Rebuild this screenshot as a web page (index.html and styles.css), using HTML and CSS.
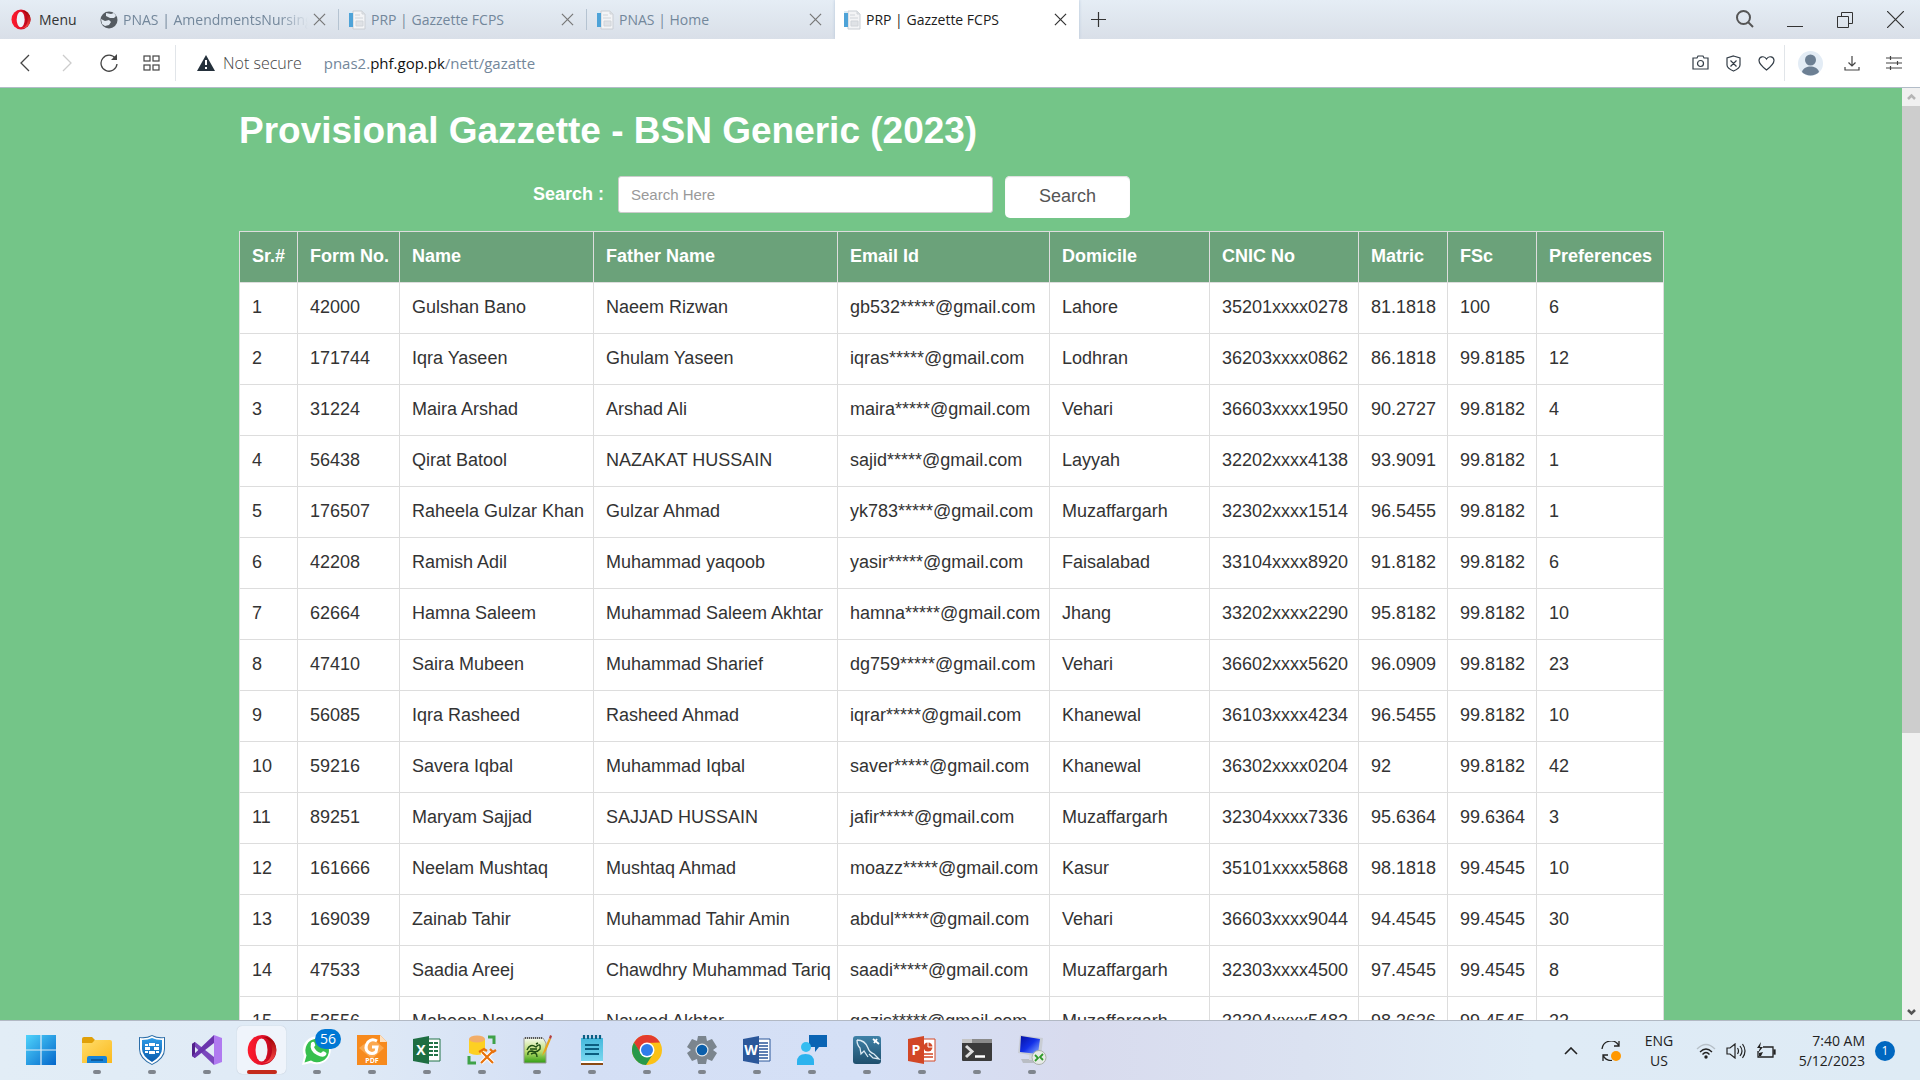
FILE: index.html
```html
<!DOCTYPE html>
<html lang="en">
<head>
<meta charset="utf-8">
<meta name="viewport" content="width=device-width, initial-scale=1">
<title>PRP | Gazzette FCPS</title>
<link rel="stylesheet" href="styles.css">
</head>
<body>
<svg class="defs" aria-hidden="true">
  <defs>
    <linearGradient id="operaOuter" x1="0" x2="1"><stop offset="0" stop-color="#ff1b2d"/><stop offset=".5" stop-color="#e3122a"/><stop offset="1" stop-color="#a70014"/></linearGradient>
    <linearGradient id="operaInner" x1="0" y1="0" x2="0" y2="1"><stop offset="0" stop-color="#9c0000"/><stop offset="1" stop-color="#ff4b4b"/></linearGradient>
    <linearGradient id="winTile" x1="0" y1="0" x2="1" y2="1"><stop offset="0" stop-color="#4fd3fb"/><stop offset="1" stop-color="#0467cb"/></linearGradient>
    <linearGradient id="folder" x1="0" y1="0" x2="1" y2="1"><stop offset="0" stop-color="#ffdd6b"/><stop offset="1" stop-color="#fbb91c"/></linearGradient>
    <linearGradient id="blueDown" x1="0" y1="0" x2="0" y2="1"><stop offset="0" stop-color="#2f9be6"/><stop offset="1" stop-color="#0a5cad"/></linearGradient>
    <linearGradient id="note" x1="0" y1="0" x2="0" y2="1"><stop offset="0" stop-color="#45b8dc"/><stop offset="1" stop-color="#7bd8f0"/></linearGradient>
    <linearGradient id="steel" x1="0" y1="0" x2="0" y2="1"><stop offset="0" stop-color="#3f82a8"/><stop offset="1" stop-color="#1e4f6d"/></linearGradient>
    <linearGradient id="screen" x1="0" y1="0" x2="1" y2="1"><stop offset="0" stop-color="#0410a0"/><stop offset=".5" stop-color="#1330e8"/><stop offset="1" stop-color="#8fb2ff"/></linearGradient>
    <linearGradient id="hills" x1="0" y1="0" x2="0" y2="1"><stop offset="0" stop-color="#f6faf0"/><stop offset=".55" stop-color="#b9dc6a"/><stop offset="1" stop-color="#2f9d13"/></linearGradient>
    <symbol id="opera" viewBox="0 0 30 30">
      <ellipse cx="15" cy="15" rx="14.300" ry="15" fill="url(#operaOuter)"/>
      <path d="M15 2c6 0 10 6 10 13s-4 13-10 13c9 1 14.300-6 14.300-13S24 1 15 2z" fill="url(#operaInner)"/>
      <ellipse cx="14.500" cy="15" rx="6" ry="11.500" fill="#eef3fa"/>
    </symbol>
    <symbol id="doc" viewBox="0 0 18 20">
      <path d="M5 1h9l3 3v15H5z" fill="#f3f4f6" stroke="#c9ced4"/>
      <path d="M14 1v3h3M7 5h5M7 8h8M8 11h7v5H8z" fill="#dfe2e6" stroke="#d0d4d9"/>
      <path d="M1 3h4v14H1z" fill="#4ea3d8"/><path d="M1 1h3v2H1z" fill="#d7ecf8"/>
    </symbol>
    <symbol id="cross" viewBox="0 0 14 14"><path d="M1 1l12 12M13 1L1 13" fill="none" stroke="currentColor" stroke-width="1.300"/></symbol>
  </defs>
</svg>

<header class="titlebar">
  <button class="menu" type="button"><svg width="20" height="21"><use href="#opera"/></svg>Menu</button>
  <nav class="tabs" aria-label="Tabs">
    <div class="tab">
      <svg width="18" height="18" viewBox="0 0 18 18"><circle cx="9" cy="9" r="8.500" fill="#555b61"/><path d="M1 8l4 2 4-1 2 2-2 3-4 1-3-2zM6 2l5 1 3-1 2 3-2 2-4 0-4-2z" fill="#e2e9f1"/></svg>
      <a class="tab-title fade" href="#">PNAS | AmendmentsNursing</a>
      <button class="tab-close" type="button" aria-label="Close tab"><svg width="13" height="13"><use href="#cross"/></svg></button>
    </div>
    <div class="tab">
      <svg width="18" height="20"><use href="#doc"/></svg>
      <a class="tab-title" href="#">PRP | Gazzette FCPS</a>
      <button class="tab-close" type="button" aria-label="Close tab"><svg width="13" height="13"><use href="#cross"/></svg></button>
    </div>
    <div class="tab">
      <svg width="18" height="20"><use href="#doc"/></svg>
      <a class="tab-title" href="#">PNAS | Home</a>
      <button class="tab-close" type="button" aria-label="Close tab"><svg width="13" height="13"><use href="#cross"/></svg></button>
    </div>
    <div class="tab active">
      <svg width="18" height="20"><use href="#doc"/></svg>
      <a class="tab-title" href="#">PRP | Gazzette FCPS</a>
      <button class="tab-close" type="button" aria-label="Close tab"><svg width="13" height="13"><use href="#cross"/></svg></button>
    </div>
    <button class="new-tab" type="button" aria-label="New tab"><svg width="15" height="15" viewBox="0 0 15 15"><path d="M7.500 0v15M0 7.500h15" stroke="#333" stroke-width="1.200"/></svg></button>
  </nav>
  <div class="window-controls">
    <button type="button" aria-label="Search tabs"><svg width="20" height="20" viewBox="0 0 20 20" fill="none" stroke="#555" stroke-width="2"><circle cx="8.500" cy="7.500" r="6.500"/><path d="M13 12l5 5"/></svg></button>
    <button type="button" aria-label="Minimize"><svg width="16" height="16" viewBox="0 0 16 16"><path d="M0 14.500h16" stroke="#333"/></svg></button>
    <button type="button" aria-label="Restore"><svg width="16" height="16" viewBox="0 0 16 16" fill="none" stroke="#333"><path d="M.5 4.500h11v11H.5zM4.500 4.500v-4h11v11h-4"/></svg></button>
    <button type="button" aria-label="Close"><svg width="17" height="17" viewBox="0 0 14 14"><path d="M0 0l14 14M14 0L0 14" stroke="#333"/></svg></button>
  </div>
</header>

<div class="toolbar">
  <div class="nav-buttons">
    <button type="button" aria-label="Back"><svg width="12" height="18" viewBox="0 0 12 18"><path d="M10 1L2 9l8 8" fill="none" stroke="#444" stroke-width="1.300"/></svg></button>
    <button type="button" aria-label="Forward"><svg width="12" height="18" viewBox="0 0 12 18"><path d="M2 1l8 8-8 8" fill="none" stroke="#ccc" stroke-width="1.300"/></svg></button>
    <button type="button" aria-label="Reload"><svg width="18" height="18" viewBox="0 0 18 18"><path d="M15.500 4.500A8 8 0 1 0 17 10" fill="none" stroke="#444" stroke-width="1.300"/><path d="M11 6h6V0z" fill="#444"/></svg></button>
    <button type="button" aria-label="Speed dial"><svg width="17" height="16" viewBox="0 0 17 16" fill="none" stroke="#444" stroke-width="1.200"><rect x="1" y="1" width="6" height="5"/><rect x="10" y="1" width="6" height="5"/><rect x="1" y="10" width="6" height="5"/><rect x="10" y="10" width="6" height="5"/></svg></button>
  </div>
  <div class="address">
    <svg width="18" height="16" viewBox="0 0 18 16"><path d="M9 0l9 16H0z" fill="#24303b"/><path d="M9 5v5M9 12v2" stroke="#fff" stroke-width="2"/></svg>
    <span class="insecure">Not secure</span>
    <a class="url" href="#">pnas2.<span>phf.gop.pk</span>/nett/gazatte</a>
  </div>
  <div class="page-actions">
    <button type="button" aria-label="Snapshot"><svg width="17" height="16" viewBox="0 0 17 16" fill="none" stroke="#333d47" stroke-width="1.200"><path d="M1 3h4l1-2h5l1 2h4v11H1z"/><circle cx="8.500" cy="8.500" r="3"/></svg></button>
    <button type="button" aria-label="Ad blocker"><svg width="15" height="17" viewBox="0 0 15 17" fill="none" stroke="#333d47" stroke-width="1.200"><path d="M7.500 1L14 3v7c0 3-4 5-6.500 6C5 15 1 13 1 10V3zM4.500 5.500l6 6M10.500 5.500l-6 6"/></svg></button>
    <button type="button" aria-label="Bookmark"><svg width="17" height="16" viewBox="0 0 17 16" fill="none" stroke="#333d47" stroke-width="1.200"><path d="M8.500 15C4 11.500 1 9 1 5.500S6 0 8.500 4C11 0 16 2 16 5.500S13 11.500 8.500 15z"/></svg></button>
  </div>
  <div class="user-actions">
    <button type="button" aria-label="Profile"><svg width="25" height="25" viewBox="0 0 25 25"><circle cx="12.500" cy="12.500" r="12.500" fill="#e3ecf5"/><circle cx="12.500" cy="9" r="5.500" fill="#6c7f93"/><path d="M4 21c1-4 5-5.500 8.500-5.500S20 17 21 21c-4 4.500-13 4.500-17 0z" fill="#6c7f93"/></svg></button>
    <button type="button" aria-label="Downloads"><svg width="16" height="16" viewBox="0 0 16 16" fill="none" stroke="#444" stroke-width="1.200"><path d="M8 1v10M4.500 7.500L8 11l3.500-3.500M1 12v3h14v-3"/></svg></button>
    <button type="button" aria-label="Easy setup"><svg width="16" height="16" viewBox="0 0 16 16" fill="none" stroke="#444" stroke-width="1.200"><path d="M0 3h16M0 8h16M0 13h16M4.500 1v4M11.500 6v4M4.500 11v4"/></svg></button>
  </div>
</div>

<div class="viewport">
  <main class="page">
    <div class="container">
      <h1>Provisional Gazzette - BSN Generic (2023)</h1>
      <form class="search">
        <label for="q">Search :</label>
        <input id="q" type="text" placeholder="Search Here">
        <button type="button">Search</button>
      </form>
      <table>
        <colgroup><col class="c-sr"><col class="c-form"><col class="c-name"><col class="c-father"><col class="c-email"><col class="c-dom"><col class="c-cnic"><col class="c-score"><col class="c-score"><col class="c-pref"></colgroup>
        <thead><tr><th>Sr.#</th><th>Form No.</th><th>Name</th><th>Father Name</th><th>Email Id</th><th>Domicile</th><th>CNIC No</th><th>Matric</th><th>FSc</th><th>Preferences</th></tr></thead>
        <tbody>
          <tr><td>1</td><td>42000</td><td>Gulshan Bano</td><td>Naeem Rizwan</td><td>gb532*****@gmail.com</td><td>Lahore</td><td>35201xxxx0278</td><td>81.1818</td><td>100</td><td>6</td></tr>
          <tr><td>2</td><td>171744</td><td>Iqra Yaseen</td><td>Ghulam Yaseen</td><td>iqras*****@gmail.com</td><td>Lodhran</td><td>36203xxxx0862</td><td>86.1818</td><td>99.8185</td><td>12</td></tr>
          <tr><td>3</td><td>31224</td><td>Maira Arshad</td><td>Arshad Ali</td><td>maira*****@gmail.com</td><td>Vehari</td><td>36603xxxx1950</td><td>90.2727</td><td>99.8182</td><td>4</td></tr>
          <tr><td>4</td><td>56438</td><td>Qirat Batool</td><td>NAZAKAT HUSSAIN</td><td>sajid*****@gmail.com</td><td>Layyah</td><td>32202xxxx4138</td><td>93.9091</td><td>99.8182</td><td>1</td></tr>
          <tr><td>5</td><td>176507</td><td>Raheela Gulzar Khan</td><td>Gulzar Ahmad</td><td>yk783*****@gmail.com</td><td>Muzaffargarh</td><td>32302xxxx1514</td><td>96.5455</td><td>99.8182</td><td>1</td></tr>
          <tr><td>6</td><td>42208</td><td>Ramish Adil</td><td>Muhammad yaqoob</td><td>yasir*****@gmail.com</td><td>Faisalabad</td><td>33104xxxx8920</td><td>91.8182</td><td>99.8182</td><td>6</td></tr>
          <tr><td>7</td><td>62664</td><td>Hamna Saleem</td><td>Muhammad Saleem Akhtar</td><td>hamna*****@gmail.com</td><td>Jhang</td><td>33202xxxx2290</td><td>95.8182</td><td>99.8182</td><td>10</td></tr>
          <tr><td>8</td><td>47410</td><td>Saira Mubeen</td><td>Muhammad Sharief</td><td>dg759*****@gmail.com</td><td>Vehari</td><td>36602xxxx5620</td><td>96.0909</td><td>99.8182</td><td>23</td></tr>
          <tr><td>9</td><td>56085</td><td>Iqra Rasheed</td><td>Rasheed Ahmad</td><td>iqrar*****@gmail.com</td><td>Khanewal</td><td>36103xxxx4234</td><td>96.5455</td><td>99.8182</td><td>10</td></tr>
          <tr><td>10</td><td>59216</td><td>Savera Iqbal</td><td>Muhammad Iqbal</td><td>saver*****@gmail.com</td><td>Khanewal</td><td>36302xxxx0204</td><td>92</td><td>99.8182</td><td>42</td></tr>
          <tr><td>11</td><td>89251</td><td>Maryam Sajjad</td><td>SAJJAD HUSSAIN</td><td>jafir*****@gmail.com</td><td>Muzaffargarh</td><td>32304xxxx7336</td><td>95.6364</td><td>99.6364</td><td>3</td></tr>
          <tr><td>12</td><td>161666</td><td>Neelam Mushtaq</td><td>Mushtaq Ahmad</td><td>moazz*****@gmail.com</td><td>Kasur</td><td>35101xxxx5868</td><td>98.1818</td><td>99.4545</td><td>10</td></tr>
          <tr><td>13</td><td>169039</td><td>Zainab Tahir</td><td>Muhammad Tahir Amin</td><td>abdul*****@gmail.com</td><td>Vehari</td><td>36603xxxx9044</td><td>94.4545</td><td>99.4545</td><td>30</td></tr>
          <tr><td>14</td><td>47533</td><td>Saadia Areej</td><td>Chawdhry Muhammad Tariq</td><td>saadi*****@gmail.com</td><td>Muzaffargarh</td><td>32303xxxx4500</td><td>97.4545</td><td>99.4545</td><td>8</td></tr>
          <tr><td>15</td><td>53556</td><td>Maheen Naveed</td><td>Naveed Akhtar</td><td>qazis*****@gmail.com</td><td>Muzaffargarh</td><td>32304xxxx5482</td><td>98.3636</td><td>99.4545</td><td>22</td></tr>
        </tbody>
      </table>
    </div>
  </main>
  <div class="scrollbar" aria-hidden="true">
    <svg width="18" height="18" viewBox="0 0 18 18"><path d="M6 11l3.500-3.500L13 11" fill="none" stroke="#b5b5b5" stroke-width="2.500"/></svg>
    <div class="track"><div class="thumb"></div></div>
    <svg width="18" height="18" viewBox="0 0 18 18"><path d="M6 8l3.500 3.500L13 8" fill="none" stroke="#555" stroke-width="2.500"/></svg>
  </div>
</div>

<footer class="taskbar">
  <div class="apps">
    <button class="app start" type="button" aria-label="Start"><svg width="30" height="30" viewBox="0 0 30 30"><path d="M0 0h14.400v14.400H0zM15.600 0H30v14.400H15.600zM0 15.600h14.400V30H0zM15.600 15.600H30V30H15.600z" fill="url(#winTile)"/></svg></button>
    <button class="app" type="button" aria-label="File Explorer"><svg width="30" height="30" viewBox="0 0 30 30"><path d="M0 4q0-2 2-2h8l3 3-2 4H0z" fill="#e0a008"/><path d="M0 8h10l3-3h15q2 0 2 2v21H0z" fill="url(#folder)"/><path d="M5 28v-5q0-2 2-2h16q2 0 2 2v5z" fill="#1683d8"/><path d="M9 25h12" stroke="#0b4f8c" stroke-width="1.500"/></svg></button>
    <button class="app" type="button" aria-label="FortiClient"><svg width="30" height="30" viewBox="0 0 30 30"><path d="M2 2q7 1 13-2 6 3 13 2v12q0 10-13 16Q2 24 2 14z" fill="#2c6ea8"/><path d="M3 3q7 1 12-2 5 3 12 2v11q0 9-12 15Q3 23 3 14z" fill="#fff"/><path d="M5 5q6 0 10-2 4 2 10 2v9q0 7-10 13Q5 21 5 14z" fill="url(#blueDown)"/><path d="M12 8h6v3h-6zM8 9h3v2H8zM19 9h3v2h-3zM8 12h5v3H8zM17 12h5v3h-5zM8 16h3v2H8zM12 16h6v3h-6zM19 16h3v2h-3z" fill="#fff"/></svg></button>
    <button class="app" type="button" aria-label="Visual Studio"><svg width="30" height="30" viewBox="0 0 30 30"><path d="M0 9l3-2 19 15v8z" fill="#7a47bd"/><path d="M0 9l3-2v16l-3-2z" fill="#52218a"/><path d="M0 21L22 0v8L3 23z" fill="#6a35ad"/><path d="M22 0l8 3v24l-8 3z" fill="#b07af0"/></svg></button>
    <button class="app current" type="button" aria-label="Opera"><svg width="30" height="30"><use href="#opera"/></svg></button>
    <button class="app" type="button" aria-label="WhatsApp"><svg width="30" height="30" viewBox="0 0 30 30"><path d="M0 30l2-9A14 14 0 1 1 9 28z" fill="#fff"/><path d="M2.500 27.500l2-7A11.800 11.800 0 1 1 9 25.500z" fill="#37c04d"/><path d="M9 8q3-3 4 1 1 2-1 3 2 5 7 6 2-3 4-1 3 1 0 4-3 2-8-1-8-4-6-12z" fill="#fff"/></svg><span class="badge">56</span></button>
    <button class="app" type="button" aria-label="Foxit PDF"><svg width="30" height="30" viewBox="0 0 30 30"><path d="M0 0h23l7 7v23H0z" fill="#f78a1d"/><path d="M23 0v7h7z" fill="#fde0bf"/><path d="M15 3l12 10-12 11L2 13z" fill="#fba84f"/><path d="M20 6q-5-3-9 1-4 6 0 10 4 3 8 0l1-5h-5" fill="none" stroke="#fff" stroke-width="3"/><text x="15" y="28" class="pdf">PDF</text></svg></button>
    <button class="app" type="button" aria-label="Excel"><svg width="30" height="30" viewBox="0 0 30 30"><path d="M14 4h14v22H14z" fill="#fff" stroke="#217346"/><path d="M17 7h4v2h-4zM22 7h4v2h-4zM17 11h4v2h-4zM22 11h4v2h-4zM17 15h4v2h-4zM22 15h4v2h-4zM17 19h4v2h-4zM22 19h4v2h-4z" fill="#217346"/><path d="M1 4l16-3v28L1 26z" fill="#1e6e42"/><text x="9" y="20" class="letter">X</text></svg></button>
    <button class="app" type="button" aria-label="SQL tools"><svg width="30" height="30" viewBox="0 0 30 30"><path d="M2 4h16v14q-8 4-16 0z" fill="#fdd023"/><ellipse cx="10" cy="4" rx="8" ry="3.500" fill="#f2ad68"/><path d="M21 2h6v7M2 21v7h7" fill="none" stroke="#3fa249" stroke-width="3"/><path d="M14 28l12-12M26 28L15 17" stroke="#fff" stroke-width="4"/><path d="M14 28l12-12M26 28L15 17M12 17l5-3 3 2M23 14l3 3 3-2" fill="none" stroke="#e8720c" stroke-width="2.200"/></svg></button>
    <button class="app" type="button" aria-label="Notepad++"><svg width="30" height="30" viewBox="0 0 30 30"><path d="M2 3h19l3 5v20H2z" fill="url(#hills)" stroke="#999"/><path d="M3 3h17" stroke="#555" stroke-width="2" stroke-dasharray="1 1"/><path d="M5 15q3-7 9-3 5-5 4 2-3 4-8 2-5 0-4 4M8 14h7M9 19q6-3 6 3M14 9l2-1" fill="none" stroke="#1d4d13" stroke-width="1.400"/><path d="M20 21l2-6 5-12 2 1-5 12z" fill="#e8a51e"/><path d="M27 3l1-3 2 1-1 3z" fill="#b33e3e"/></svg></button>
    <button class="app" type="button" aria-label="Notepad"><svg width="30" height="30" viewBox="0 0 30 30"><path d="M4 3h22v24H4z" fill="url(#note)"/><path d="M4 26h22v2H4z" fill="#fff"/><path d="M4 28h22v2H4z" fill="#8a4a14"/><path d="M8 10h14M8 14h14M8 19h14" stroke="#0b5d80" stroke-width="1.800"/><path d="M7 0v4M11 0v4M15 0v4M19 0v4M23 0v4" stroke="#0c5f84" stroke-width="2.200"/></svg></button>
    <button class="app" type="button" aria-label="Chrome"><svg width="30" height="30" viewBox="0 0 30 30"><circle cx="15" cy="15" r="15" fill="#fbc116"/><path d="M2 7.500a15 15 0 0 1 26 0L15 8l-7 10z" fill="#e33b2e"/><path d="M2 7.500A15 15 0 0 0 14 30l7-11-6 2.500-6-3z" fill="#27994a"/><circle cx="15" cy="15" r="7.500" fill="#fff"/><circle cx="15" cy="15" r="6" fill="#2f7de9"/></svg></button>
    <button class="app" type="button" aria-label="Settings"><svg width="30" height="30" viewBox="0 0 30 30"><path d="M11 1h8l1 5 5-2 5 8-4 3 4 3-5 8-5-2-1 5h-8l-1-5-5 2-5-8 4-3-4-3 5-8 5 2z" fill="#7b858e"/><circle cx="15" cy="15" r="6.500" fill="#e3e8ec"/><circle cx="15" cy="15" r="5.300" fill="#0c5faa"/></svg></button>
    <button class="app" type="button" aria-label="Word"><svg width="30" height="30" viewBox="0 0 30 30"><path d="M14 4h14v22H14z" fill="#fff" stroke="#2b579a"/><path d="M17 8h9M17 11h9M17 14h9M17 17h9M17 20h9M17 23h9" stroke="#2b579a" stroke-width="1.300"/><path d="M1 4l16-3v28L1 26z" fill="#2b579a"/><text x="9" y="20" class="letter">W</text></svg></button>
    <button class="app" type="button" aria-label="Feedback"><svg width="30" height="30" viewBox="0 0 30 30"><path d="M12 0h18v12h-8l-4 5v-5h-6z" fill="#0a64b4"/><circle cx="9" cy="12" r="5" fill="#35bdf1"/><path d="M0 30v-3q0-8 8.500-8t8.500 8v3z" fill="#2cb3ee"/></svg></button>
    <button class="app" type="button" aria-label="MySQL Workbench"><svg width="30" height="30" viewBox="0 0 30 30"><rect x="1" y="1" width="28" height="28" rx="3" fill="url(#steel)"/><path d="M5 5q8 0 11 8 1 4 6 6l5 5-6-1-4-4M5 5q0 5 3 8l1 6 3-3 4 6" fill="none" stroke="#dbe9f2" stroke-width="1.300"/><path d="M21 4l6 5M25 4l-3 4" stroke="#fff" stroke-width="1.800"/></svg></button>
    <button class="app" type="button" aria-label="PowerPoint"><svg width="30" height="30" viewBox="0 0 30 30"><path d="M14 4h14v22H14z" fill="#fff" stroke="#d24726"/><circle cx="21" cy="12" r="4.500" fill="#d24726"/><path d="M21 7v5h5" fill="none" stroke="#fff"/><path d="M17 19h9M17 22h9" stroke="#d24726" stroke-width="1.500"/><path d="M1 4l16-3v28L1 26z" fill="#d24726"/><text x="9" y="20" class="letter">P</text></svg></button>
    <button class="app" type="button" aria-label="Terminal"><svg width="30" height="30" viewBox="0 0 30 30"><rect y="4" width="30" height="22" rx="1" fill="#3b3b3b"/><path d="M0 4h30v4H0z" fill="#8b8b8b"/><path d="M0 4h10v4H0z" fill="#c4c4c4"/><path d="M4 11l6 5.500L4 22" fill="none" stroke="#ddd" stroke-width="3"/><path d="M13 21.500h10" stroke="#fff" stroke-width="2.500"/></svg></button>
    <button class="app" type="button" aria-label="Remote Desktop"><svg width="30" height="30" viewBox="0 0 30 30"><path d="M4 24h13l2 4H6z" fill="#b9bdc4"/><path d="M12 20h4v5h-4z" fill="#d5d8dd"/><path d="M3 0l23 3-2 19L1 18z" fill="#c9cdd4"/><path d="M4 1l19 3-2 15L3 17z" fill="url(#screen)"/><circle cx="22" cy="22.500" r="7" fill="#e7ebe7" stroke="#aab0aa"/><path d="M18 20l3 3-3 3M26 19l-3 3 3 3" fill="none" stroke="#2f9a2a" stroke-width="1.800"/></svg></button>
  </div>
  <div class="tray">
    <button class="t-wide" type="button" aria-label="Hidden icons"><svg width="14" height="8" viewBox="0 0 14 8"><path d="M1 7l6-6 6 6" fill="none" stroke="#222" stroke-width="1.600"/></svg></button>
    <button class="t-wide" type="button" aria-label="Updates"><svg width="20" height="20" viewBox="0 0 20 20"><path d="M1 8A9 9 0 0 1 18 5M18 0v5h-5M11 19.500A9 9 0 0 1 2 14M2 20v-6h5" fill="none" stroke="#222" stroke-width="1.300"/><circle cx="15" cy="15" r="5" fill="#ff9800"/></svg></button>
    <button class="lang" type="button">ENG<br>US</button>
    <button class="t-icon" type="button" aria-label="Wi-Fi"><svg width="20" height="16" viewBox="0 0 20 16" fill="none" stroke-width="1.300"><path d="M1 6q9-9 18 0" stroke="#b7c0c8"/><path d="M4 9q6-6 12 0M6.500 11.500q3.500-4 7 0" stroke="#222"/><circle cx="10" cy="14" r="1.700" fill="#222"/></svg></button>
    <button class="t-icon" type="button" aria-label="Volume"><svg width="20" height="16" viewBox="0 0 20 16" fill="none" stroke="#222" stroke-width="1.200"><path d="M1 5h3l5-4v14l-5-4H1zM11.500 5q2 3 0 6M14 3q4 5 0 10M16.500 1q5 7 0 14"/></svg></button>
    <button class="t-icon" type="button" aria-label="Battery"><svg width="20" height="18" viewBox="0 0 20 18" fill="none" stroke="#222" stroke-width="1.300"><path d="M7 5h10v10H2V9"/><path d="M18 8h1v4h-1z" fill="#222"/><path d="M5 0L1 6h3l-2 5 5-6H4zM3 14v-3l4-1-2 4z" fill="#222" stroke="none"/></svg></button>
    <button class="clock" type="button">7:40 AM<br>5/12/2023</button>
    <span class="count">1</span>
  </div>
</footer>
</body>
</html>
```

FILE: styles.css
```css
* { box-sizing: border-box; }

body {
  margin: 0;
  height: 100vh;
  display: grid;
  grid-template-rows: 39px 49px minmax(0, 1fr) 59px;
  overflow: hidden;
  font-family: "Open Sans", "Noto Sans", sans-serif;
  font-size: 14px;
  color: #333;
}

.defs { position: absolute; width: 0; height: 0; }

button {
  border: 0;
  padding: 0;
  background: none;
  font: inherit;
  color: inherit;
}

svg { display: block; flex: none; }
a { text-decoration: none; color: inherit; }

/* Title bar */
.titlebar {
  display: flex;
  background: linear-gradient(#e5edf5, #d9dfe8);
}

.menu {
  width: 91px;
  display: flex;
  align-items: center;
  gap: 8px;
  padding-left: 11px;
  flex: none;
}

.tabs { display: flex; flex: 1; min-width: 0; }

.tab {
  width: 248px;
  display: flex;
  align-items: center;
  gap: 5px;
  padding: 0 13px 0 9px;
  color: #73879b;
  background: linear-gradient(#b5c3d1, #b5c3d1) right center / 1px 21px no-repeat;
}

.tab:nth-child(3) { background: none; }

.tab.active {
  width: 244px;
  padding: 0 12px 0 8px;
  background: #fff;
  color: #1c1c1c;
  box-shadow: 0 0 3px #b3c4d8;
  clip-path: inset(0 -3px 0 -3px);
}

.tab-title {
  flex: 1;
  min-width: 0;
  overflow: hidden;
  white-space: nowrap;
}

.tab-title.fade {
  -webkit-mask-image: linear-gradient(to right, #000 84%, transparent);
  mask-image: linear-gradient(to right, #000 84%, transparent);
}

.tab-close { color: #777; }
.active .tab-close { color: #333; }
.new-tab { padding: 0 12px; }

.window-controls { display: flex; }
.window-controls button {
  width: 50px;
  display: grid;
  place-items: center;
}

/* Address bar */
.toolbar {
  display: flex;
  align-items: center;
  background: #fff;
  border-bottom: 1px solid #b2bcc8;
  padding: 0 5px 0 4px;
}

.nav-buttons, .page-actions, .user-actions {
  display: flex;
  align-items: center;
  height: 36px;
}

.nav-buttons { border-right: 1px solid #e1e5e9; }
.nav-buttons, .user-actions { flex: none; }
.nav-buttons { padding-right: 3px; }

.nav-buttons button, .user-actions button {
  width: 42px;
  display: grid;
  place-items: center;
}

.page-actions button {
  width: 33px;
  display: grid;
  place-items: center;
}

.page-actions { padding-right: 1px; }
.user-actions { border-left: 1px solid #e1e5e9; padding-left: 4px; }

.address {
  flex: 1;
  display: flex;
  align-items: center;
  padding-left: 21px;
  font-size: 15px;
}

.insecure {
  margin: 0 22px 0 8px;
  font-size: 16px;
  font-weight: 300;
  color: #444;
}

.url { color: #73879b; }
.url span { color: #111; }

/* Web page */
.viewport {
  display: flex;
  min-height: 0;
  border-bottom: 1px solid #b2b9c4;
}

.page {
  flex: 1;
  min-width: 0;
  overflow: hidden;
  background: #74c588;
  font-family: "Liberation Sans", Arial, sans-serif;
  font-size: 18px;
  line-height: 24px;
}

.container { max-width: 1424px; margin: 0 auto; }

h1 {
  margin: 22px 0 24px;
  font-size: 37px;
  line-height: 42px;
  color: #fff;
}

.search {
  display: flex;
  align-items: flex-start;
  margin-bottom: 13px;
}

.search label {
  width: 365px;
  padding-top: 6px;
  text-align: right;
  font-weight: bold;
  color: #fff;
}

.search input {
  width: 375px;
  height: 37px;
  margin: 0 12px 0 14px;
  padding: 0 12px;
  border: 1px solid #ccc;
  border-radius: 3px;
  background: #fff;
  font: inherit;
  font-size: 15px;
  color: #555;
}

.search input::placeholder { color: #999; }

.search button {
  width: 125px;
  height: 42px;
  padding-bottom: 2px;
  border-radius: 5px;
  background: #fff;
  box-shadow: inset 0 1px 1px #ddd;
  color: #555;
}

table {
  width: 100%;
  table-layout: fixed;
  border-collapse: collapse;
  background: #fff;
}

th, td {
  padding: 12px 0 14px 12px;
  border: 1px solid #ddd;
  text-align: left;
  white-space: nowrap;
}

th { background: #6ba27a; color: #fff; }

.c-sr { width: 58px; }
.c-form { width: 102px; }
.c-name { width: 194px; }
.c-father { width: 244px; }
.c-email { width: 212px; }
.c-dom { width: 160px; }
.c-cnic { width: 149px; }
.c-score { width: 89px; }
.c-pref { width: 127px; }

.scrollbar {
  width: 18px;
  flex: none;
  display: flex;
  flex-direction: column;
  background: #f0f0f0;
}

.track { flex: 1; }
.thumb { height: 70%; background: #cdcdcd; }

/* Taskbar */
.taskbar {
  display: flex;
  justify-content: space-between;
  background: linear-gradient(to right, #e2edf6 0, #dfeaf6 18%, #d4dff5 30%, #d5e0f6 45%, #d8dbee 56%, #dbe2f1 68%, #dfebf6 80%, #deebf5);
}

.apps { display: flex; padding-left: 12px; }

.app {
  position: relative;
  width: 55px;
  display: flex;
  flex-direction: column;
  align-items: center;
  padding-top: 14px;
}

.app::after {
  content: "";
  width: 8px;
  height: 4px;
  margin-top: 5px;
  border-radius: 2px;
  background: #7f858d;
}

.app.start { width: 57px; }
.app.start::after { background: none; }

.app.current {
  width: 49px;
  margin: 5px 3px 6px;
  padding-top: 9px;
  border-radius: 5px;
  background: #eff4fb;
  box-shadow: 0 0 1px #aab6c4;
}

.app.current::after { width: 30px; background: #c42b1c; }

.badge {
  position: absolute;
  top: 8px;
  right: 3px;
  width: 26px;
  height: 20px;
  border-radius: 10px;
  background: #0078d4;
  color: #fff;
  line-height: 20px;
}

.letter {
  font: bold 14px "Open Sans", sans-serif;
  fill: #fff;
  text-anchor: middle;
}

.pdf {
  font: bold 7px "Open Sans", sans-serif;
  fill: #fff;
  text-anchor: middle;
}

.tray {
  display: flex;
  align-items: center;
  padding-right: 25px;
  line-height: 20px;
  color: #222;
}

.tray button { display: grid; place-items: center; }
.tray .t-wide { width: 40px; }
.tray .t-icon { width: 30px; }
.tray .lang { display: block; width: 56px; margin-right: 4px; text-align: center; }
.tray .clock { display: block; width: 84px; text-align: right; }

.count {
  width: 20px;
  height: 20px;
  margin-left: 10px;
  border-radius: 50%;
  background: #0067c0;
  color: #fff;
  font-size: 12px;
  text-align: center;
}
```
